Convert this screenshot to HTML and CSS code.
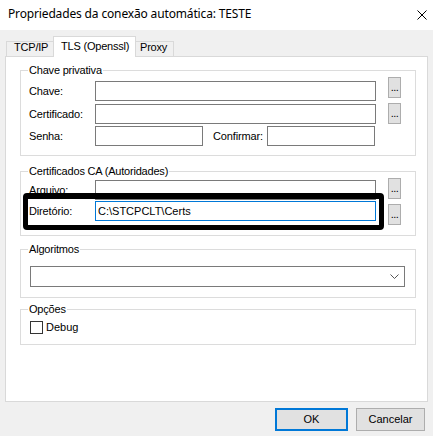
FILE: index.html
```html
<!DOCTYPE html>
<html lang="pt">
<head>
<meta charset="utf-8">
<title>Propriedades da conexão automática: TESTE</title>
<link rel="stylesheet" href="styles.css">
</head>
<body>
<div class="window">
  <header class="titlebar">
    <span class="title">Propriedades da conexão automática: TESTE</span>
    <svg class="close" width="10" height="10" viewBox="0 0 10 10" aria-hidden="true">
      <path d="M0.5 0.5 L9.5 9.5 M9.5 0.5 L0.5 9.5" stroke="#000" stroke-width="1" fill="none"/>
    </svg>
  </header>

  <nav class="tabs">
    <div class="tab tab-tcp">TCP/IP</div>
    <div class="tab tab-tls active">TLS (Openssl)</div>
    <div class="tab tab-proxy">Proxy</div>
  </nav>

  <main class="panel">
    <fieldset class="group g-key">
      <legend>Chave privativa</legend>
      <div class="row r-chave">
        <span class="label">Chave:</span>
        <span class="input wide"></span>
        <span class="browse">...</span>
      </div>
      <div class="row r-cert">
        <span class="label">Certificado:</span>
        <span class="input wide"></span>
        <span class="browse">...</span>
      </div>
      <div class="row r-senha">
        <span class="label">Senha:</span>
        <span class="input short"></span>
        <span class="label confirm">Confirmar:</span>
        <span class="input short"></span>
      </div>
    </fieldset>

    <fieldset class="group g-ca">
      <legend>Certificados CA (Autoridades)</legend>
      <div class="row r-arquivo">
        <span class="label">Arquivo:</span>
        <span class="input wide"></span>
        <span class="browse">...</span>
      </div>
      <div class="row r-dir">
        <span class="label">Diretório:</span>
        <span class="input wide focused">C:\STCPCLT\Certs</span>
        <span class="browse">...</span>
      </div>
    </fieldset>

    <fieldset class="group g-algo">
      <legend>Algoritmos</legend>
      <div class="select">
        <svg class="chevron" width="9" height="5" viewBox="0 0 9 5" aria-hidden="true">
          <polyline points="0.5,0.5 4.5,4.5 8.5,0.5" stroke="#555" stroke-width="1" fill="none"/>
        </svg>
      </div>
    </fieldset>

    <fieldset class="group g-opt">
      <legend>Opções</legend>
      <div class="check-row">
        <span class="checkbox"></span>
        <span class="check-label">Debug</span>
      </div>
    </fieldset>
  </main>

  <footer class="footer">
    <button class="btn btn-ok">OK</button>
    <button class="btn btn-cancel">Cancelar</button>
  </footer>

  <div class="highlight"></div>
</div>
</body>
</html>
```

FILE: styles.css
```css
* { box-sizing: border-box; }

body {
  margin: 0;
  background: #f0f0f0;
}

.window {
  position: relative;
  width: 433px;
  height: 436px;
  background: #f0f0f0;
  font: 11px/13px "Liberation Sans", Arial, sans-serif;
  color: #000;
  overflow: hidden;
}

/* Title bar */
.titlebar {
  height: 30px;
  background: #fff;
  display: flex;
  align-items: center;
  justify-content: space-between;
  padding: 0 6px 2px 8px;
}
.title {
  font: 12px/16px "Noto Sans", "Open Sans", sans-serif;
  letter-spacing: -0.15px;
}
.close {
  display: block;
  margin-top: 2px;
}

/* Tabs */
.tabs {
  position: relative;
  z-index: 1;
  display: flex;
  align-items: flex-end;
  height: 26px;
  padding-left: 6px;
}
.tab {
  height: 15px;
  border: 1px solid #d9d9d9;
  border-bottom: none;
  background: #f0f0f0;
  line-height: 11px;
  white-space: nowrap;
  letter-spacing: -0.2px;
}
.tab-tcp {
  width: 48px;
  padding-left: 7px;
}
.tab-tls {
  width: 83px;
  margin-left: -1px;
  padding-left: 7px;
}
.tab-proxy {
  width: 39px;
  margin-left: -1px;
  padding-left: 4px;
}
.tab.active {
  position: relative;
  z-index: 2;
  height: 21px;
  margin-bottom: -1px;
  padding-top: 4px;
  background: #fff;
}

/* Panel */
.panel {
  margin: 0 5px;
  height: 346px;
  border: 1px solid #d9d9d9;
  background: #fff;
  padding: 7px 11px 0 14px;
}

.group {
  margin: 0;
  min-width: 0;
  border: 1px solid #dcdcdc;
  padding: 0 14px 9px 8px;
}
.group legend {
  padding: 0 1px;
  margin-left: -1px;
  line-height: 13px;
  font-size: 11px;
  letter-spacing: -0.2px;
}

.g-ca { margin-top: 9px; padding-bottom: 10px; }
.g-algo { margin-top: 7px; padding: 0 10px 10px 9px; }
.g-algo legend { margin-left: -2px; }
.g-opt { margin-top: 5px; padding-bottom: 10px; }

.row {
  display: flex;
  align-items: flex-start;
}
.label {
  width: 66px;
  line-height: 20px;
  white-space: nowrap;
  letter-spacing: -0.15px;
}
.input {
  display: block;
  height: 20px;
  border: 1px solid #7a7a7a;
  background: #fff;
  padding-left: 2px;
  line-height: 18px;
  white-space: nowrap;
}
.input.wide {
  width: 281px;
  margin-right: 12px;
}
.input.short {
  width: 108px;
}
.input.focused {
  border-color: #0078d7;
}
.label.confirm {
  width: 54px;
  margin-left: 10px;
}
.browse {
  display: block;
  width: 13px;
  height: 21px;
  border: 1px solid #adadad;
  background: #e1e1e1;
  text-align: center;
  line-height: 19px;
  letter-spacing: -0.5px;
}

/* Vertical rhythm of rows */
.r-chave .label, .r-chave .input { margin-top: 4px; }
.r-cert { margin-top: 2px; }
.r-cert .label, .r-cert .input { margin-top: 1px; }
.r-senha { margin-top: 2px; }

.r-arquivo .label, .r-arquivo .input { margin-top: 2px; }
.r-dir { margin-top: 1px; }
.r-dir .browse { margin-top: 3px; }

/* Combo box */
.select {
  margin-top: 10px;
  width: 375px;
  height: 21px;
  border: 1px solid #7a7a7a;
  background: #fff;
  display: flex;
  align-items: center;
  justify-content: flex-end;
  padding-right: 5px;
}
.chevron { display: block; }

/* Checkbox */
.check-row {
  margin-top: 5px;
  margin-left: 1px;
  display: flex;
  align-items: center;
  gap: 3px;
}
.checkbox {
  width: 13px;
  height: 13px;
  border: 1px solid #333;
  background: #fff;
}

/* Footer buttons */
.footer {
  display: flex;
  justify-content: flex-end;
  gap: 8px;
  padding: 6px 8px 0 0;
}
.btn {
  height: 23px;
  margin: 0;
  padding: 0;
  border: 1px solid #adadad;
  background: #e1e1e1;
  font: 11px/13px "Liberation Sans", Arial, sans-serif;
  color: #000;
  border-radius: 0;
}
.btn-ok {
  width: 73px;
  border: 2px solid #0078d7;
}
.btn-cancel {
  width: 69px;
}

/* Annotation frame drawn over the Diretório row */
.highlight {
  position: absolute;
  left: 23px;
  top: 193px;
  width: 361px;
  height: 37px;
  border: 5px solid #000;
  border-top-width: 6px;
  border-radius: 4px;
  pointer-events: none;
}
```
